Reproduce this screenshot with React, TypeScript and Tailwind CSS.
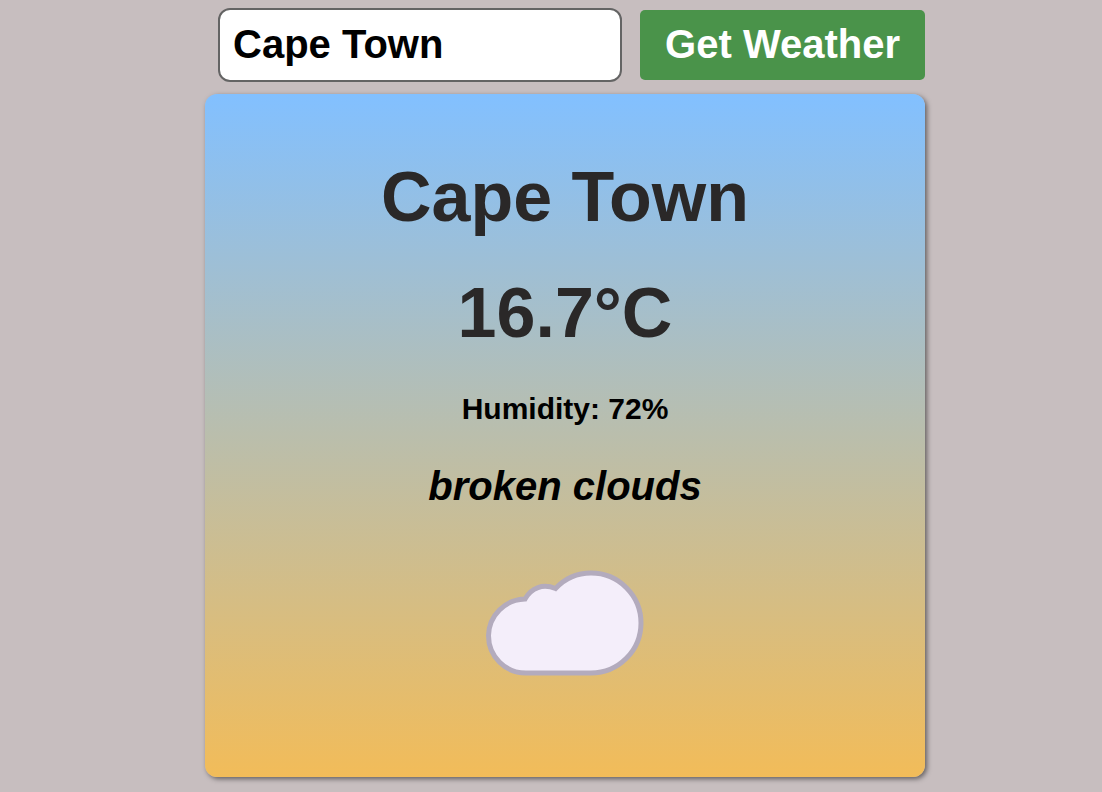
import { useState } from "react";
import type { FormEvent } from "react";

interface Weather {
  city: string;
  temperature: number;
  humidity: number;
  description: string;
}

const report: Weather = {
  city: "Cape Town",
  temperature: 16.7,
  humidity: 72,
  description: "broken clouds",
};

function CloudIcon() {
  return (
    <svg className="h-27 w-40" viewBox="0 0 160 108" fill="none" aria-hidden="true">
      <path
        d="M41.5 104A37.5 37.3 0 0 1 3.500 66.500A37.5 37.3 0 0 1 40 30C46.500 18.500 58 14.500 70.500 19.500C80 9.500 93 4 106 4A50 50 0 0 1 156 54A50 50 0 0 1 106 104Z"
        fill="#f4eefa"
        stroke="#b3abbd"
        strokeWidth="5"
      />
    </svg>
  );
}

function SearchForm() {
  const [city, setCity] = useState(report.city);
  const submit = (event: FormEvent) => event.preventDefault();

  return (
    <form onSubmit={submit} className="flex items-center gap-[18px] pl-[13px]">
      <input
        type="text"
        aria-label="City"
        value={city}
        onChange={(event) => setCity(event.target.value)}
        className="min-w-0 flex-1 rounded-xl border-2 border-[#646464] bg-white px-[13px] pt-[10px] pb-3 text-[40px] leading-[48px] font-bold text-black"
      />
      <button
        type="submit"
        className="rounded-[5px] bg-[#4a934a] px-[25px] pt-[10px] pb-3 text-[40px] leading-[48px] font-bold whitespace-nowrap text-white"
      >
        Get Weather
      </button>
    </form>
  );
}

function WeatherCard({ weather }: { weather: Weather }) {
  return (
    <section className="flex flex-col items-center rounded-xl bg-linear-to-b/srgb from-[#82c0ff] to-[#f2bc59] px-12 pt-[63px] pb-[100px] text-center font-bold shadow-[2px_2px_5px_rgba(0,0,0,0.5)]">
      <h1 className="text-[70px] leading-20 text-[#2a2828]">{weather.city}</h1>
      <p className="mt-9 text-[70px] leading-20 text-[#2a2828]">{`${weather.temperature}°C`}</p>
      <p className="mt-[38px] text-[30px] leading-9">{`Humidity: ${weather.humidity}%`}</p>
      <p className="mt-9 text-[40px] leading-[46px] italic">{weather.description}</p>
      <div className="mt-15">
        <CloudIcon />
      </div>
    </section>
  );
}

export default function App() {
  return (
    <main className="min-h-screen bg-[#c7bebf] pt-2 pb-[15px] pl-7 font-['Liberation_Sans',Arial,sans-serif] text-black">
      <div className="mx-auto flex max-w-[720px] flex-col gap-3">
        <SearchForm />
        <WeatherCard weather={report} />
      </div>
    </main>
  );
}
